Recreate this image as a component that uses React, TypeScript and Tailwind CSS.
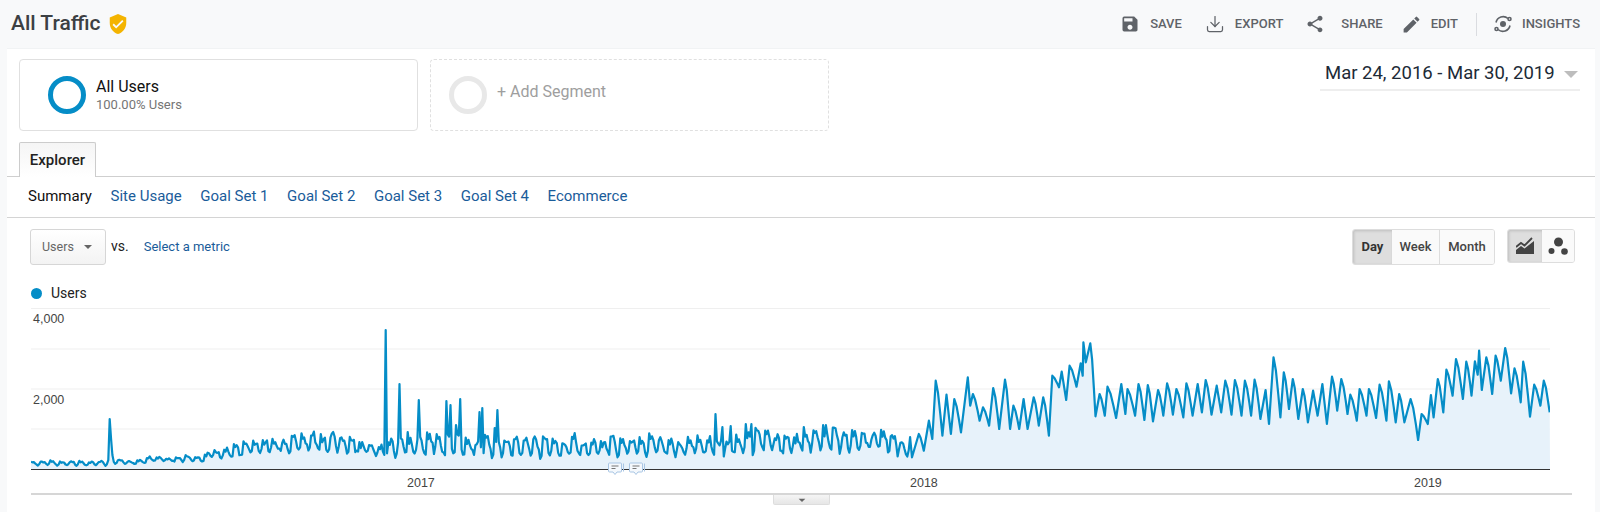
import { MdSave, MdShare, MdEdit, MdVerifiedUser, MdArrowDropDown } from "react-icons/md";
import { Download } from "lucide-react";

const BASE = 162; // svg height, baseline sits here

// [x, peak height, trough height] for the quiet part of the chart
const envelope: number[][] = [
  [0, 9, 5], [75, 9, 5], [87, 10, 7], [104, 9, 6], [119, 13, 8], [174, 14, 9], [181, 20, 12],
  [206, 24, 13], [239, 34, 18], [307, 36, 18], [351, 27, 14], [389, 36, 17], [499, 33, 15],
  [678, 33, 16], [720, 40, 19], [860, 40, 20], [872, 32, 13], [882, 36, 17],
];

const spikes: number[][] = [
  [78, 51], [79.5, 32], [81, 15], [355, 140], [368, 86], [377, 38], [387.5, 70], [416, 69], [419, 65],
  [425, 45], [429, 71], [449, 58], [451, 62], [464, 42], [467, 60], [684, 56], [691, 43], [699, 44],
  [715, 46], [720, 46],
];

const weekShape = [1, 0.85, 0.95, 0.7, 0.3, 0, 0.15];

function noise(i: number) {
  const v = Math.sin(i * 12.9898) * 43758.5453;
  return v - Math.floor(v);
}

function envAt(x: number) {
  for (let i = 1; i < envelope.length; i++) {
    if (x <= envelope[i][0]) {
      const [x0, p0, t0] = envelope[i - 1];
      const [x1, p1, t1] = envelope[i];
      const f = (x - x0) / (x1 - x0);
      return [p0 + (p1 - p0) * f, t0 + (t1 - t0) * f];
    }
  }
  return envelope[envelope.length - 1].slice(1);
}

const quiet: number[][] = [];
for (let d = 0; d * 1.38 < 880; d++) {
  const x = d * 1.38;
  const [p, t] = envAt(x);
  const week = Math.floor(d / 7);
  const scale = 0.62 + noise(week + 900) * 0.5;
  const jitter = (noise(d + 500) - 0.5) * (p - t) * 0.45;
  const h = t + (p - t) * weekShape[d % 7] * scale + jitter;
  const spike = spikes.find((s) => Math.abs(s[0] - x) < 0.7);
  quiet.push([x, spike ? spike[1] : Math.max(h, 2)]);
}

// read off the reference: x in px from chart left, height above baseline, alternating peaks and dips
const ramp: number[][] = [
  [1130, 470], [1150, 400], [1165, 450], [1180, 360], [1190, 415], [1200, 240], [1220, 405], [1232, 282],
  [1245, 400], [1255, 295], [1275, 395], [1295, 230], [1302, 315], [1310, 280], [1330, 360], [1340, 320],
  [1358, 375], [1370, 262], [1388, 385], [1405, 237], [1420, 385], [1430, 315], [1447, 385], [1460, 295],
  [1472, 385], [1490, 290], [1505, 375], [1518, 290], [1535, 405], [1545, 225],
].map(([x, y]) => [499 + x / 2.958, (508 - y) / 3]);

const late: number[][] = [
  [-3, 260], [5, 213], [18, 298], [28, 195], [48, 258], [60, 188], [66, 225], [68, 125], [75, 185], [88, 128],
  [103, 347], [115, 280], [130, 345], [138, 258], [163, 352], [178, 250], [190, 340], [196, 265], [218, 345],
  [228, 250], [245, 358], [255, 253], [270, 362], [285, 268], [300, 345], [311, 248], [328, 342], [338, 265],
  [358, 350], [367, 248], [385, 345], [400, 250], [412, 335], [423, 238], [440, 342], [455, 255], [468, 335],
  [480, 240], [498, 342], [508, 238], [527, 345], [537, 240], [555, 345], [565, 237], [582, 355], [597, 268],
  [607, 370], [620, 170], [640, 350], [650, 215], [665, 325], [676, 235], [692, 355], [705, 265], [720, 365],
  [735, 270], [748, 345], [762, 250], [775, 370], [790, 228], [805, 330], [817, 235], [835, 340], [843, 282],
  [862, 360], [870, 265], [890, 345], [897, 265], [918, 352], [928, 252], [948, 360], [955, 242], [975, 365],
  [985, 280], [1000, 365], [1018, 295], [1040, 418], [1050, 340], [1068, 370], [1077, 283], [1085, 350],
  [1097, 235], [1113, 335], [1122, 207], [1140, 285], [1150, 175], [1170, 295], [1180, 183], [1195, 285],
  [1205, 182], [1213, 222], [1217, 150], [1225, 268], [1238, 170], [1255, 280], [1265, 165], [1280, 240],
  [1293, 142], [1310, 278], [1320, 203], [1338, 305], [1345, 183], [1365, 348], [1377, 252], [1395, 315],
  [1405, 240], [1422, 335],
].map(([x, y]) => [1029 + x / 2.904, (508 - y) / 3]);

// the weekday plateau: coming down from a peak holds up for a couple of days before the weekend dip
function withShoulders(pts: number[][]) {
  const out: number[][] = [];
  pts.forEach(([x, h], i) => {
    out.push([x, h]);
    const next = pts[i + 1];
    if (next && next[1] < h && next[0] - x > 5) {
      out.push([x + (next[0] - x) * 0.35, h - (h - next[1]) * 0.22]);
      out.push([x + (next[0] - x) * 0.7, h - (h - next[1]) * 0.62]);
    }
  });
  return out;
}

const points = [...quiet, ...withShoulders([...ramp, ...late])];
const line = points.map(([x, h]) => `${x.toFixed(1)},${(BASE - h).toFixed(1)}`).join(" ");
const area = `0,${BASE} ${line} 1519,${BASE}`;

function TrafficChart() {
  return (
    <svg width="1519" height="163" className="block">
      {[0.5, 41, 81, 121].map((y) => (
        <line key={y} x1="0" x2="1519" y1={y} y2={y} stroke="#efefef" strokeWidth="1" />
      ))}
      <polygon points={area} fill="#e7f2fa" />
      <polyline points={line} fill="none" stroke="#058dc7" strokeWidth="2.2" strokeLinejoin="round" />
      <line x1="0" x2="1519" y1={BASE - 0.5} y2={BASE - 0.5} stroke="#333333" strokeWidth="1" />
    </svg>
  );
}

function NoteBubble() {
  return (
    <svg width="17" height="14" viewBox="0 0 17 14" className="block">
      <path d="M1.5 1h11a1 1 0 0 1 1 1v7a1 1 0 0 1-1 1H9l-2 2.5L5 10H1.500a1 1 0 0 1-1-1V2a1 1 0 0 1 1-1z" fill="#f4f8fc" stroke="#a9c6e4" />
      <path d="M15.500 1.500v8" stroke="#a9c6e4" />
      <path d="M3.500 4h7M3.500 6.500h4" stroke="#777" />
    </svg>
  );
}

function InsightsIcon() {
  return (
    <svg width="20" height="20" viewBox="0 0 20 20" fill="none" stroke="#5f6368" strokeWidth="1.600">
      <circle cx="10" cy="10" r="3" fill="#5f6368" stroke="none" />
      <path d="M3 8.500A7.300 7.300 0 0 1 15 4.500" />
      <path d="M17 11.500A7.300 7.300 0 0 1 5 15.500" />
      <circle cx="16.500" cy="5" r="1.500" />
      <circle cx="3.500" cy="15" r="1.500" />
    </svg>
  );
}

function HeaderAction({ icon, label, className = "" }: { icon: React.ReactNode; label: string; className?: string }) {
  return (
    <div className={`flex items-center text-[13px] font-medium text-[#5f6368] ${className}`}>
      {icon}
      <span>{label}</span>
    </div>
  );
}

const subTabs = ["Site Usage", "Goal Set 1", "Goal Set 2", "Goal Set 3", "Goal Set 4", "Ecommerce"];

export default function App() {
  return (
    <div className="flex h-[512px] flex-col overflow-hidden bg-[#f8f9fa] font-['Roboto',sans-serif]">
      <header className="flex h-[48px] shrink-0 items-center justify-between pl-[11px] pr-[20px]">
        <div className="flex items-center gap-[6px]">
          <h1 className="text-[21px] font-medium text-[#3c4043]">All Traffic</h1>
          <MdVerifiedUser size={22} className="text-[#f4b400]" />
        </div>
        <div className="flex items-center">
          <HeaderAction icon={<MdSave size={20} className="mr-[10px]" />} label="SAVE" />
          <HeaderAction icon={<Download size={20} strokeWidth={1.5} className="mr-[10px]" />} label="EXPORT" className="ml-[23px]" />
          <HeaderAction icon={<MdShare size={20} className="mr-[16px]" />} label="SHARE" className="ml-[22px]" />
          <HeaderAction icon={<MdEdit size={21} className="mr-[9px]" />} label="EDIT" className="ml-[18px]" />
          <div className="ml-[18px] h-[23px] w-px bg-[#dadce0]" />
          <HeaderAction icon={<InsightsIcon />} label="INSIGHTS" className="ml-[16px] gap-[9px]" />
        </div>
      </header>

      <main className="ml-[7px] w-[1588px] flex-1 border-t border-[#f1f3f4] bg-white">
        <div className="flex justify-between pl-[12px] pr-[15px] pt-[10px]">
          <div className="flex gap-[12px]">
            <div className="flex h-[72px] w-[399px] items-center rounded-[4px] border border-[#e0e0e0] pl-[28px]">
              <div className="h-[38px] w-[38px] rounded-full border-[5px] border-[#058dc7]" />
              <div className="ml-[10px]">
                <div className="mb-[1px] text-[16px] leading-[18px] text-[#111]">All Users</div>
                <div className="text-[13px] leading-[16px] text-[#757575]">100.00% Users</div>
              </div>
            </div>
            <div className="flex h-[72px] w-[399px] items-center rounded-[4px] border border-dashed border-[#e0e0e0] pl-[18px]">
              <div className="h-[38px] w-[38px] rounded-full border-[5px] border-[#e8e8e8]" />
              <div className="mb-[6px] ml-[10px] text-[16px] text-[#9e9e9e]">+ Add Segment</div>
            </div>
          </div>
          <div className="flex h-[32px] w-[260px] items-center justify-between border-b-2 border-[#eeeeee] pl-[5px]">
            <span className="text-[18.500px] text-[#202a36]">Mar 24, 2016 - Mar 30, 2019</span>
            <span className="mr-[2px] h-0 w-0 border-x-[7px] border-t-[7px] border-x-transparent border-t-[#bdbdbd]" />
          </div>
        </div>

        <div className="mt-[11px] h-[35px] border-b border-[#cfcfcf] pl-[12px]">
          <div className="flex h-[35px] w-[77px] items-center justify-center rounded-t-[2px] border border-b-0 border-[#cccccc] bg-gradient-to-b from-[#f5f5f5] to-white text-[15px] font-medium text-[#222]">
            Explorer
          </div>
        </div>

        <nav className="flex h-[41px] items-center gap-[18.600px] border-b border-[#d4d4d4] pb-[2px] pl-[21px] text-[15px]">
          <span className="text-[#111]">Summary</span>
          {subTabs.map((t) => (
            <span key={t} className="text-[#1a5c9a]">{t}</span>
          ))}
        </nav>

        <div className="flex items-start justify-between pl-[23px] pr-[20px] pt-[11px]">
          <div className="flex items-center">
            <div className="flex h-[36px] w-[76px] items-center rounded-[3px] border border-[#d6d6d6] bg-gradient-to-b from-white to-[#f3f3f3] pl-[11px] text-[12.500px] text-[#666]">
              Users
              <span className="ml-[10px] h-0 w-0 border-x-[4px] border-t-[4px] border-x-transparent border-t-[#666]" />
            </div>
            <span className="mb-[2px] ml-[5px] text-[14px] text-[#222]">vs.</span>
            <span className="ml-[15px] text-[13px] text-[#1a5c9a]">Select a metric</span>
          </div>
          <div className="flex">
            <div className="flex h-[36px] overflow-hidden rounded-[3px] border border-[#dddddd] text-[13px] font-medium text-[#444]">
              <span className="flex w-[39px] items-center justify-center bg-[#dedede] font-bold text-[#333] shadow-[inset_1px_1px_3px_rgba(0,0,0,0.15)]">Day</span>
              <span className="flex w-[48px] items-center justify-center border-r border-[#dddddd] bg-[#fafafa]">Week</span>
              <span className="flex w-[54px] items-center justify-center bg-[#fafafa]">Month</span>
            </div>
            <div className="ml-[12px] flex h-[34px] overflow-hidden rounded-[3px] border border-[#dddddd]">
              <span className="flex w-[34px] items-center justify-center bg-[#dedede] shadow-[inset_1px_1px_3px_rgba(0,0,0,0.15)]">
                <svg width="18" height="18" viewBox="0 0 18 18">
                  <path d="M0 10l5-4 3.500 2.500L16 1" fill="none" stroke="#444" strokeWidth="1.800" />
                  <path d="M0 13l5-4 3.500 2.500L18 4v13H0z" fill="#444" />
                </svg>
              </span>
              <span className="flex w-[32px] items-center justify-center bg-[#fafafa]">
                <svg width="20" height="18" viewBox="0 0 20 18" fill="#444">
                  <circle cx="10.500" cy="5" r="4.500" />
                  <circle cx="3.500" cy="14" r="3" />
                  <circle cx="16.500" cy="14.500" r="3.300" />
                </svg>
              </span>
            </div>
          </div>
        </div>

        <div className="ml-[24px] mt-[21px] flex h-[14px] items-center">
          <span className="h-[11px] w-[11px] rounded-full bg-[#058dc7]" />
          <span className="ml-[9px] text-[14px] text-[#222]">Users</span>
        </div>

        <div className="relative ml-[24px] mt-[8px] h-[185px] w-[1519px] font-['Liberation_Sans',sans-serif] text-[12.500px] text-[#444]">
          <TrafficChart />
          <span className="absolute left-[2px] top-[2px]">4,000</span>
          <span className="absolute left-[2px] top-[83px]">2,000</span>
          <span className="absolute left-[376px] top-[166px]">2017</span>
          <span className="absolute left-[879px] top-[166px]">2018</span>
          <span className="absolute left-[1383px] top-[166px]">2019</span>
          <div className="absolute left-[577px] top-[154px]"><NoteBubble /></div>
          <div className="absolute left-[598px] top-[154px]"><NoteBubble /></div>
        </div>
        <div className="ml-[24px] h-[2px] w-[1541px] bg-[#d6d6d6]" />
        <div className="ml-[766px] flex h-[10px] w-[57px] items-center justify-center rounded-b-[2px] border border-t-0 border-[#dddddd] bg-gradient-to-b from-[#f5f5f5] to-[#e6e6e6]">
          <MdArrowDropDown size={16} className="text-[#666]" />
        </div>
      </main>
    </div>
  );
}
